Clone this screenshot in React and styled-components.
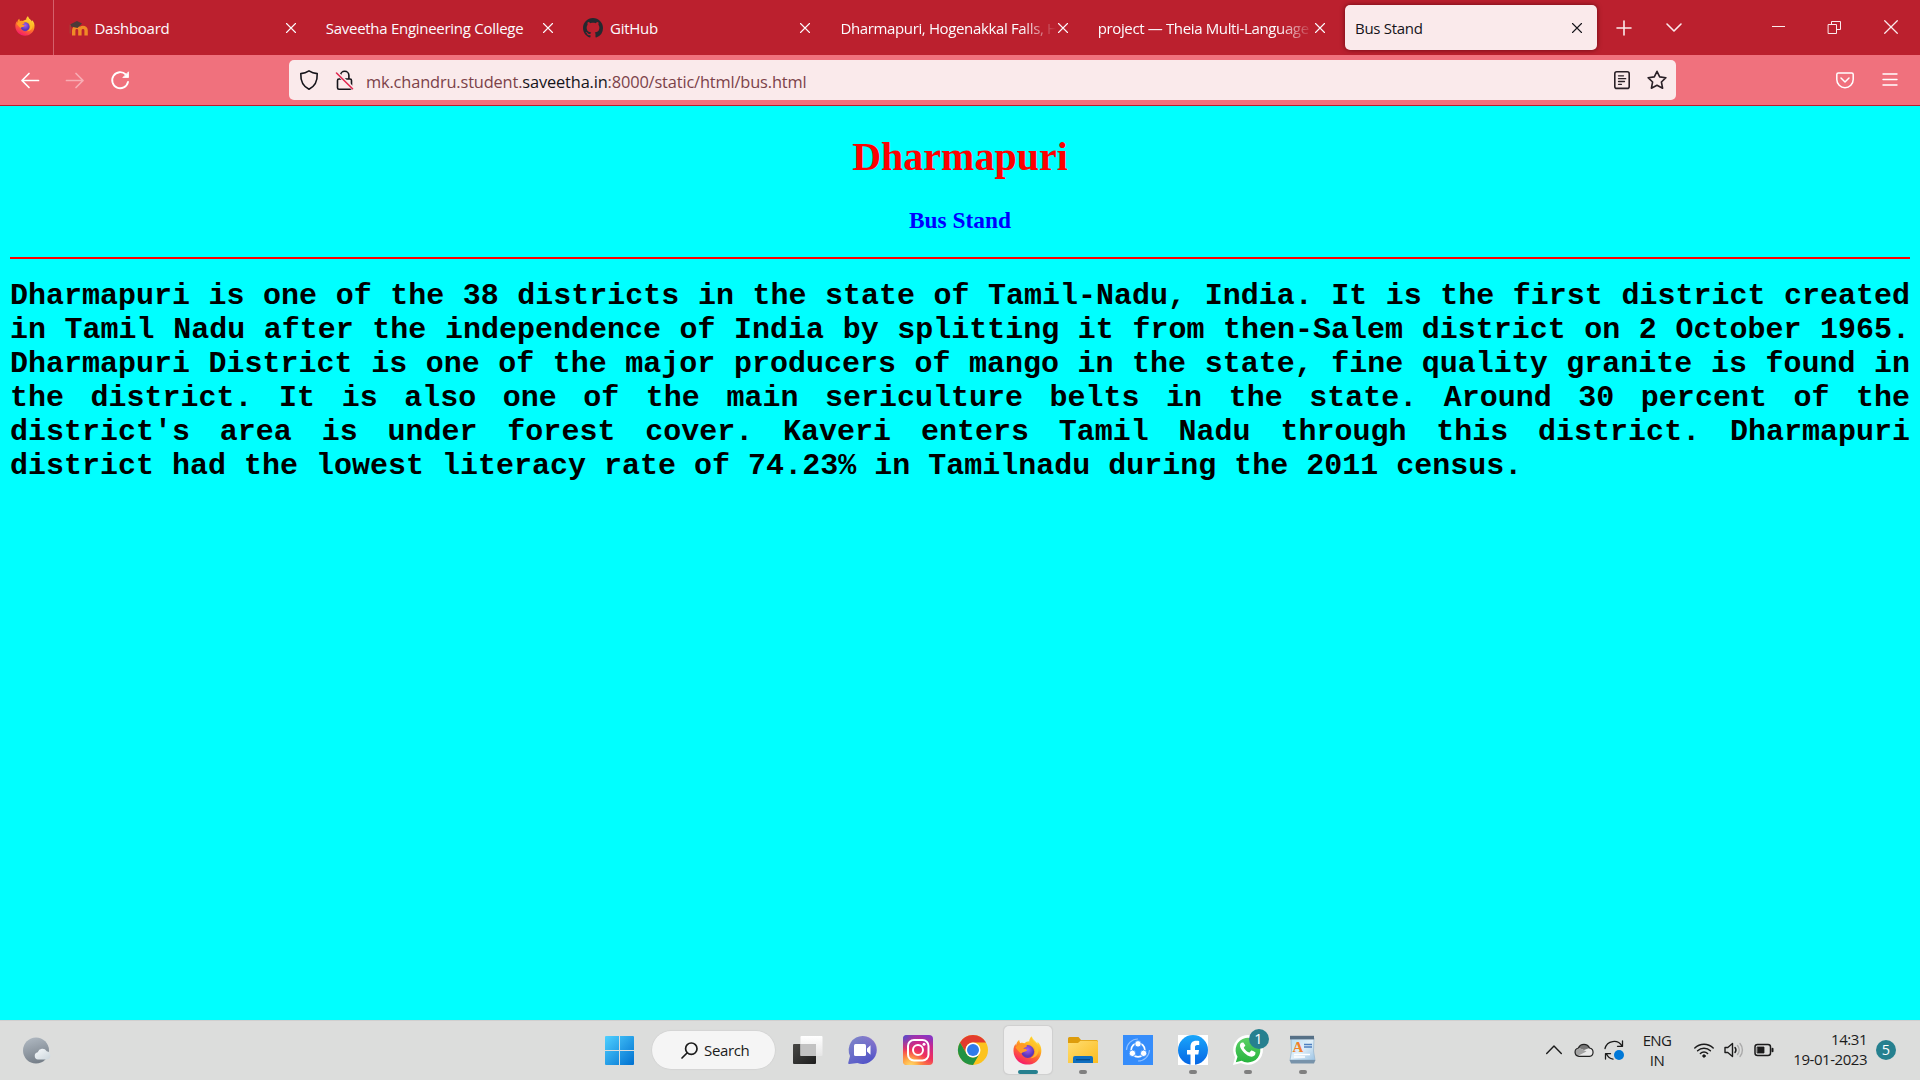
import React from "react";
import styled, { createGlobalStyle } from "styled-components";

const Global = createGlobalStyle`
  html, body { margin: 0; padding: 0; }
  body { font-family: "Open Sans", "Noto Sans", sans-serif; overflow: hidden; }
  * { box-sizing: border-box; }
  svg { display: block; flex: none; overflow: visible; }
`;

const Screen = styled.div`
  width: 1920px;
  height: 1080px;
  display: grid;
  grid-template-rows: 55px 51px 914px 60px;
  background: #00ffff;
`;

const TabBar = styled.header`
  display: flex;
  align-items: stretch;
  background: #bb202e;
  color: #fbeaec;
`;
const ViewButton = styled.div`
  width: 54px;
  padding: 0 0 4px 15px;
  display: flex;
  align-items: center;
  border-right: 1px solid #d4616b;
`;
const Tabs = styled.div`
  display: flex;
  padding-left: 2px;
`;
const Tab = styled.div`
  width: 252.3px;
  height: 45px;
  margin: 5px 2.5px;
  padding: 0 15px 0 10px;
  display: flex;
  align-items: center;
  gap: 7px;
  border-radius: 5px;
  background: ${(p) => (p.$active ? "#faeaeb" : "transparent")};
  box-shadow: ${(p) => (p.$active ? "0 0 5px rgba(70, 0, 8, 0.7)" : "none")};
  color: ${(p) => (p.$active ? "#15141a" : "#fbfbfe")};
`;
const TabTitle = styled.span`
  flex: 1;
  min-width: 0;
  white-space: nowrap;
  font-size: 15px;
  line-height: 24px;
  padding-top: 1px;
  letter-spacing: ${(p) => (p.$fade ? "-0.36px" : "-0.28px")};
  margin-right: ${(p) => (p.$fade ? "-5px" : "0")};
  mask-image: ${(p) => (p.$fade ? "linear-gradient(to left, transparent, #000 34px)" : "none")};
`;
const TabActions = styled.div`
  display: flex;
  align-items: center;
  gap: 32px;
  padding-left: 14px;
`;
const WindowControls = styled.div`
  margin-left: auto;
  display: flex;
  align-items: center;
  gap: 43px;
  padding: 0 22px 1px 0;
`;

const NavBar = styled.nav`
  display: flex;
  align-items: center;
  background: #f0717d;
  border-bottom: 1px solid #bb202e;
`;
const NavButtons = styled.div`
  width: 289px;
  padding-left: 20px;
  display: flex;
  align-items: center;
  gap: 25px;
`;
const UrlBar = styled.div`
  width: 1387px;
  height: 40px;
  padding: 0 9px 0 10px;
  display: flex;
  align-items: center;
  background: #faeaeb;
  border-radius: 5px;
`;
const UrlIcons = styled.div`
  display: flex;
  gap: 15px;
  width: 67px;
`;
const Url = styled.div`
  flex: 1;
  font-size: 16.4px;
  letter-spacing: -0.16px;
  line-height: 24px;
  padding-top: 3px;
  color: #7c4249;
`;
const Host = styled.span`
  color: #15141a;
`;
const PageActions = styled.div`
  display: flex;
  gap: 15px;
`;
const NavEnd = styled.div`
  margin-left: auto;
  display: flex;
  align-items: center;
  gap: 26px;
  padding-right: 20px;
`;

const Page = styled.main`
  padding: 0 10px;
  display: flex;
  flex-direction: column;
  font-family: "Liberation Serif", "Times New Roman", serif;
`;
const Title = styled.h1`
  margin: 28px 0 0;
  font-size: 40px;
  line-height: 46px;
  text-align: center;
  color: #ff0000;
`;
const Subtitle = styled.h3`
  margin: 27px 0 0;
  font-size: 23.4px;
  line-height: 27px;
  text-align: center;
  color: #0000ff;
`;
const Rule = styled.hr`
  width: 100%;
  height: 2px;
  margin: 23px 0 20px;
  border: 0;
  background: #ff0000;
`;
const Story = styled.p`
  margin: 0;
  font: bold 30px/34px "Liberation Mono", "Courier New", monospace;
  text-align: justify;
  color: #000;
`;

const Taskbar = styled.footer`
  display: grid;
  grid-template-columns: 592px 739px 1fr;
  align-items: center;
  background: #dcdddc;
  box-shadow: inset 0 1px 0 #d0cfcf;
  color: #1b1b1b;
`;
const Weather = styled.div`
  padding-left: 22px;
`;
const Dock = styled.div`
  display: flex;
  align-items: center;
`;
const Slot = styled.div`
  width: ${(p) => p.$w || 55}px;
  height: 60px;
  display: flex;
  align-items: center;
  justify-content: center;
`;
const Tile = styled.div`
  position: relative;
  width: 48px;
  height: 48px;
  display: flex;
  align-items: center;
  justify-content: center;
  border-radius: 5px;
  background: ${(p) => (p.$active ? "#eeeeee" : "transparent")};
  box-shadow: ${(p) => (p.$active ? "0 0 1px 0.5px #cfcfcf" : "none")};
`;
const Indicator = styled.i`
  position: absolute;
  bottom: 0;
  left: 50%;
  transform: translateX(-50%);
  width: ${(p) => (p.$active ? 20 : 8)}px;
  height: 4px;
  border-radius: 2px;
  background: ${(p) => (p.$active ? "#26808f" : "#808080")};
`;
const Count = styled.span`
  width: 20px;
  height: 20px;
  border-radius: 50%;
  background: #26808f;
  color: #fff;
  font-size: 14.5px;
  line-height: 20px;
  text-align: center;
`;
const FloatingCount = styled(Count)`
  position: absolute;
  left: 25px;
  top: 3px;
`;
const Search = styled.div`
  width: 123px;
  height: 38px;
  padding-left: 29px;
  display: flex;
  align-items: center;
  gap: 6px;
  border-radius: 19px;
  background: #f5f5f5;
  box-shadow: 0 0 1px 0.5px #cdcdcd;
  font-size: 15px;
  letter-spacing: -0.35px;
`;
const Tray = styled.div`
  display: flex;
  align-items: center;
  justify-content: flex-end;
  padding-right: 24px;
  font-size: 15px;
  line-height: 20px;
`;
const TrayIcons = styled.div`
  display: flex;
  align-items: center;
  gap: 10px;

  svg:first-child {
    margin-right: ${(p) => p.$lead || 0}px;
  }
`;
const Language = styled.div`
  width: 70px;
  padding-right: 4px;
  text-align: center;
  letter-spacing: -0.6px;
`;
const Clock = styled.div`
  width: 93px;
  padding-bottom: 2px;
  text-align: right;
  letter-spacing: -0.46px;
  margin-right: 9px;
`;

const Line = ({ w = 20, h = w, box = "0 0 20 20", sw = 1.5, color = "currentColor", children }) => (
  <svg width={w} height={h} viewBox={box} fill="none" stroke={color} strokeWidth={sw} strokeLinecap="round" strokeLinejoin="round">
    {children}
  </svg>
);

const Cross = ({ size = 10, sw = 1.1 }) => (
  <Line w={size} box="0 0 10 10" sw={sw}>
    <path d="M.5.5l9 9M9.5.5l-9 9" />
  </Line>
);

const Firefox = ({ size, id }) => (
  <svg width={size} height={size} viewBox="0 0 30 30">
    <defs>
      <linearGradient id={id + "a"} x1=".8" y1="0" x2=".3" y2="1">
        <stop offset="0" stopColor="#fff44f" />
        <stop offset=".35" stopColor="#ffb41f" />
        <stop offset=".6" stopColor="#ff6a2e" />
        <stop offset="1" stopColor="#f6156f" />
      </linearGradient>
      <radialGradient id={id + "b"} cx=".5" cy=".35">
        <stop offset="0" stopColor="#a65cf2" />
        <stop offset="1" stopColor="#5b37b8" />
      </radialGradient>
    </defs>
    <path fill={`url(#${id}a)`} d="M17 5.500C17 3 18 1 19.500.3c.4 3 3.300 4.300 5 6.700.3.400.6.800.8 1.300.1-1 .1-1.500 0-2.300C28.500 8.500 30 13 29 18c-1.400 7-7.200 11.600-14 11.600C7 29.600.7 23.500.5 15.500c-.1-3 .8-5.600 2.200-7.500.1 1 .2 1.500.5 2C3.500 7.500 4.500 5.500 6.500 4c0 1.500.3 2.500 1 3.400 1.500-.5 3-.4 4.500.2 1-1.300 3-2.100 5-2.100z" />
    <circle cx="15.200" cy="16" r="6.700" fill={`url(#${id}b)`} />
    <path fill="#ff9a25" d="M2.500 12c2-3 5-4 9-3.500 1.500.2 2.500.8 3 1.500 0 1.700-3.500 1.800-3.700 3.300 3-.4 4.200 1.200 3.200 2.200-2 1.200-3.500.6-5.500 2.500-2-1-4-4-6-6z" />
    <path fill="#ffc22c" d="M17 5.500c2.500 1.500 5 4 5.800 8 .8 4-1.300 8-5 9.500 5.500.3 9.500-4.500 8.500-10.500C25.500 8.500 20 6.500 19.500 1 18 2 17 3.500 17 5.500z" opacity=".85" />
  </svg>
);

const Moodle = () => (
  <svg width="19" height="20" viewBox="0 0 19 20">
    <path d="M4.700 17.500v-5a3.100 3.100 0 0 1 6.200 0v5m0-5a3.100 3.100 0 0 1 6.200 0v5" fill="none" stroke="#f08a26" strokeWidth="3.400" />
    <path d="M1 6.500L8 3l5 2.500L8.500 10 2 8.500z" fill="#4b3a38" />
    <path d="M1.200 6.500v9" stroke="#9d4a3a" strokeWidth="1" />
  </svg>
);

const GitHubMark = () => (
  <svg width="20" height="20" viewBox="0 0 16 16" fill="#24292f">
    <path d="M8 0C3.580 0 0 3.580 0 8c0 3.540 2.290 6.530 5.470 7.590.4.070.55-.17.55-.38 0-.19-.01-.82-.01-1.490-2.010.37-2.530-.49-2.690-.94-.09-.23-.48-.94-.82-1.130-.28-.15-.68-.52-.01-.53.63-.01 1.080.58 1.230.82.72 1.210 1.870.87 2.330.66.070-.52.28-.87.51-1.070-1.780-.2-3.640-.89-3.640-3.950 0-.87.31-1.590.82-2.150-.08-.2-.36-1.020.08-2.120 0 0 .67-.21 2.200.82.64-.18 1.320-.27 2-.27s1.360.09 2 .27c1.530-1.040 2.200-.82 2.200-.82.44 1.100.16 1.920.08 2.120.51.56.82 1.270.82 2.150 0 3.070-1.870 3.750-3.650 3.950.29.25.54.73.54 1.480 0 1.070-.01 1.930-.01 2.200 0 .21.15.46.55.38A8.010 8.010 0 0 0 16 8c0-4.420-3.580-8-8-8z" />
  </svg>
);

const TABS = [
  { title: "Dashboard", icon: <Moodle /> },
  { title: "Saveetha Engineering College" },
  { title: "GitHub", icon: <GitHubMark /> },
  { title: "Dharmapuri, Hogenakkal Falls, H", fade: true },
  { title: "project — Theia Multi-Language", fade: true },
  { title: "Bus Stand", active: true },
];

const WeatherIcon = () => (
  <svg width="29" height="27" viewBox="0 0 29 27">
    <defs>
      <linearGradient id="moon" x1=".3" y1="0" x2=".6" y2="1">
        <stop offset="0" stopColor="#aeb7c0" />
        <stop offset="1" stopColor="#747d87" />
      </linearGradient>
      <linearGradient id="mcloud" x1="0" y1="0" x2="1" y2="1">
        <stop offset="0" stopColor="#f6f9fb" />
        <stop offset="1" stopColor="#ccd6dd" />
      </linearGradient>
    </defs>
    <circle cx="14" cy="13.500" r="13" fill="url(#moon)" />
    <path d="M16 22.500a3.700 3.700 0 0 1-.3-7.300 5 5 0 0 1 9-1 4.200 4.200 0 0 1 .3 8.300z" fill="url(#mcloud)" />
  </svg>
);

const WindowsLogo = () => (
  <svg width="29" height="29" viewBox="0 0 29 29">
    <defs>
      <linearGradient id="win" x1="0" y1="0" x2="1" y2="1">
        <stop offset="0" stopColor="#4fd0ff" />
        <stop offset="1" stopColor="#0070d0" />
      </linearGradient>
    </defs>
    <path fill="url(#win)" d="M1 0h13v14H0V1a1 1 0 0 1 1-1zM15 0h13a1 1 0 0 1 1 1v13H15zM0 15h14v14H1a1 1 0 0 1-1-1zM15 15h14v13a1 1 0 0 1-1 1H15z" />
  </svg>
);

const TaskView = () => (
  <svg width="30" height="28" viewBox="0 0 30 28">
    <defs>
      <linearGradient id="tvd" x1="0" y1="0" x2="1" y2="1">
        <stop offset="0" stopColor="#484846" />
        <stop offset="1" stopColor="#1e1e1e" />
      </linearGradient>
      <linearGradient id="tvl" x1="0" y1="0" x2="0" y2="1">
        <stop offset="0" stopColor="#fff" />
        <stop offset="1" stopColor="#e6e6e6" />
      </linearGradient>
    </defs>
    <rect y="8" width="23" height="20" rx="1" fill="url(#tvd)" />
    <rect x="7.500" width="22" height="20" rx="1" fill="url(#tvl)" />
    <path d="M7.500 8H23v12H7.500z" fill="#c2c2c2" />
  </svg>
);

const Chat = () => (
  <svg width="29" height="28" viewBox="0 0 29 28">
    <defs>
      <linearGradient id="chat" x1=".1" y1="0" x2=".8" y2="1">
        <stop offset="0" stopColor="#8288c9" />
        <stop offset="1" stopColor="#4f50c8" />
      </linearGradient>
      <linearGradient id="chat2" x1="0" y1=".8" x2="1" y2="0">
        <stop offset=".5" stopColor="#a07ad0" stopOpacity="0" />
        <stop offset="1" stopColor="#a77bd0" />
      </linearGradient>
    </defs>
    <path d="M15 0a14 14 0 1 1-5.500 27L1.500 28c-1 0-1.500-.7-1.200-1.600L2 20A14 14 0 0 1 15 0z" fill="url(#chat)" />
    <circle cx="15" cy="14" r="14" fill="url(#chat2)" opacity=".6" />
    <rect x="6" y="8" width="12" height="12" rx="1.500" fill="#fff" />
    <path d="M19 12.500l3.500-3.200v9.400L19 15.500z" fill="#fff" />
  </svg>
);

const Instagram = () => (
  <svg width="30" height="30" viewBox="0 0 30 30">
    <defs>
      <linearGradient id="ig1" x1=".3" y1="1" x2=".7" y2="0">
        <stop offset="0" stopColor="#ff9a3c" />
        <stop offset=".4" stopColor="#f0305c" />
        <stop offset=".75" stopColor="#c9268f" />
        <stop offset="1" stopColor="#8a35c2" />
      </linearGradient>
      <radialGradient id="ig2" cx=".25" cy="1.050" r=".6">
        <stop offset="0" stopColor="#ffe070" />
        <stop offset=".4" stopColor="#ffb04a" />
        <stop offset="1" stopColor="#ff5a3c" stopOpacity="0" />
      </radialGradient>
      <radialGradient id="ig3" cx="0" cy="0" r=".55">
        <stop offset="0" stopColor="#3f55d4" />
        <stop offset="1" stopColor="#7a40c8" stopOpacity="0" />
      </radialGradient>
    </defs>
    {["ig1", "ig2", "ig3"].map((g) => (
      <rect key={g} width="30" height="30" rx="4" fill={`url(#${g})`} />
    ))}
    <g fill="none" stroke="#fff" strokeWidth="2">
      <rect x="5" y="5" width="20.500" height="20.500" rx="6" />
      <circle cx="15" cy="15" r="5" />
    </g>
    <circle cx="21" cy="9.200" r="1.500" fill="#fff" />
  </svg>
);

const Chrome = () => (
  <svg width="30" height="30" viewBox="0 0 30 30">
    <circle cx="15" cy="15" r="15" fill="#fcc31e" />
    <path d="M2 7.500A15 15 0 0 1 28 7.500H15A7.500 7.500 0 0 0 8.500 18.750z" fill="#e33b2e" />
    <path d="M2 7.500A15 15 0 0 0 15 30l6.500-11.250a7.500 7.500 0 0 1-13 0z" fill="#229342" />
    <circle cx="15" cy="15" r="7.500" fill="#fff" />
    <circle cx="15" cy="15" r="6" fill="#2f7bea" />
  </svg>
);

const Folder = () => (
  <svg width="30" height="27" viewBox="0 0 30 27">
    <defs>
      <linearGradient id="fold" x1="0" y1="0" x2="1" y2="1">
        <stop offset="0" stopColor="#ffdd72" />
        <stop offset="1" stopColor="#fbbc1f" />
      </linearGradient>
    </defs>
    <path d="M1.500 0h9l2.500 3h15.500A1.500 1.500 0 0 1 30 4.500V12H0V1.500A1.500 1.500 0 0 1 1.500 0z" fill="#dd9c0c" />
    <path d="M0 6h10l2.500-2.200h16A1.500 1.500 0 0 1 30 5.300V26H0z" fill="url(#fold)" />
    <path d="M5 26v-5a2 2 0 0 1 2-2h16a2 2 0 0 1 2 2v5z" fill="#0f6fc0" />
    <path d="M8 22.700h14" stroke="#064a86" strokeWidth="1.300" />
  </svg>
);

const ShareIt = () => (
  <svg width="30" height="30" viewBox="0 0 30 30" fill="none">
    <path d="M0 0h30v30H0z" fill="#368dfb" />
    <path d="M3.500 15a11.500 11.500 0 0 1 11.500-11M26.500 15a11.500 11.500 0 0 1-11.500 11" stroke="#8fc0ff" strokeWidth="1.200" />
    <circle cx="15" cy="15" r="6.800" stroke="#fff" strokeWidth="1.700" />
    <g fill="#fff" stroke="#368dfb" strokeWidth=".8">
      <circle cx="15" cy="8.800" r="3.200" />
      <circle cx="9.400" cy="18.300" r="3.200" />
      <circle cx="20.600" cy="18.300" r="3.200" />
    </g>
  </svg>
);

const Facebook = () => (
  <svg width="30" height="30" viewBox="0 0 30 30">
    <defs>
      <linearGradient id="fb" x1="0" y1="0" x2="0" y2="1">
        <stop offset="0" stopColor="#19a6fb" />
        <stop offset="1" stopColor="#0565e4" />
      </linearGradient>
    </defs>
    <path d="M0 0h30v30H0z" fill="#fff" />
    <circle cx="15" cy="15" r="15" fill="url(#fb)" />
    <path d="M12.500 30V19.500H9V15h3.500v-3.200c0-4 2.200-6 5.600-6 1.300 0 2.400.2 3.100.3V10h-2c-1.700 0-2.200 1-2.200 2.200V15H21l-.7 4.500H17V30z" fill="#fff" />
  </svg>
);

const WhatsApp = () => (
  <svg width="30" height="30" viewBox="0 0 30 30">
    <defs>
      <linearGradient id="wa" x1="0" y1="0" x2="0" y2="1">
        <stop offset="0" stopColor="#5bd066" />
        <stop offset="1" stopColor="#27b43e" />
      </linearGradient>
    </defs>
    <path d="M0 30l2.100-7.700A14.900 14.900 0 1 1 7.900 28z" fill="#fff" />
    <path d="M2.800 27.200l1.700-5.500a12.400 12.400 0 1 1 4.100 4z" fill="url(#wa)" />
    <path d="M11 8.500c-.4-.9-.8-.9-1.300-.9-2 0-2.900 1.800-2.700 3.400.3 2.800 4.700 8.600 9.500 10.300 3.500 1.200 6.200-.6 6-3.700-.1-.6-3.700-2.300-4.200-2.100-.6.300-1.300 2-2 2.100-1.200.1-5.300-3.200-5.500-5 0-.6 1.500-1.600 1.500-2.200 0-.5-1-1.300-1.300-1.900z" fill="#fff" />
  </svg>
);

const WordPad = () => (
  <svg width="27" height="30" viewBox="0 0 27 30">
    <defs>
      <linearGradient id="wp" x1="0" y1="0" x2="1" y2="1">
        <stop offset="0" stopColor="#b8dcf4" />
        <stop offset=".5" stopColor="#e0eff9" />
        <stop offset="1" stopColor="#9cc3e4" />
      </linearGradient>
    </defs>
    <path d="M2 3h23l-.5 13L26 25H1l1.500-9z" fill="url(#wp)" stroke="#93b4cf" strokeWidth=".7" />
    <path d="M1 .8h24v3.600H1z" fill="#567086" />
    <path d="M.5 25h26l-1.500 3.500H2z" fill="#7893aa" />
    <text x="3.500" y="16.500" fontFamily="Liberation Serif, serif" fontWeight="bold" fontSize="15" fill="#f2812a">A</text>
    <path d="M15 9.500h8M15 12h8" stroke="#4d7fc0" strokeWidth="1.300" />
    <path d="M5 19.500h16M5 22h11" stroke="#fff" strokeWidth="1.300" />
  </svg>
);

const DOCK = [
  { key: "view", icon: <TaskView /> },
  { key: "chat", icon: <Chat /> },
  { key: "insta", icon: <Instagram /> },
  { key: "chrome", icon: <Chrome /> },
  { key: "firefox", icon: <Firefox size={29} id="ffd" />, open: true, active: true },
  { key: "files", icon: <Folder />, open: true },
  { key: "share", icon: <ShareIt /> },
  { key: "facebook", icon: <Facebook />, open: true },
  { key: "whatsapp", icon: <WhatsApp />, open: true, count: 1 },
  { key: "wordpad", icon: <WordPad />, open: true },
];

export default function App() {
  return (
    <Screen>
      <Global />
      <TabBar>
        <ViewButton>
          <Firefox size={20} id="fft" />
        </ViewButton>
        <Tabs>
          {TABS.map((t) => (
            <Tab key={t.title} $active={t.active}>
              {t.icon}
              <TabTitle $fade={t.fade}>{t.title}</TabTitle>
              <Cross />
            </Tab>
          ))}
        </Tabs>
        <TabActions>
          <Line w={20} sw={1.6}>
            <path d="M10 3v14M3 10h14" />
          </Line>
          <Line w={16} h={16} box="0 0 16 16" sw={1.6}>
            <path d="M1 4l7 7 7-7" />
          </Line>
        </TabActions>
        <WindowControls>
          <Line w={13} box="0 0 13 13" sw={1}>
            <path d="M.5 5.500h12" strokeLinecap="square" />
          </Line>
          <Line w={13} box="0 0 13 13" sw={1}>
            <path d="M.5 3.500h8v9h-8zM3.500 3.500v-3h9v8h-4" strokeLinejoin="miter" />
          </Line>
          <Cross size={14} sw={0.9} />
        </WindowControls>
      </TabBar>

      <NavBar>
        <NavButtons>
          <Line color="#fff" sw={1.7}>
            <path d="M2 10.500h16.500M9 3.500l-7 7 7 7" />
          </Line>
          <Line color="#f8adb4" sw={1.7}>
            <path d="M1.500 10.500H18M11 3.500l7 7-7 7" />
          </Line>
          <Line color="#fff" sw={1.8}>
            <path d="M15.800 4.500A8 8 0 1 0 18 12" />
            <path d="M18.500 2.200v5.300h-5.300z" fill="#fff" strokeWidth=".8" />
          </Line>
        </NavButtons>
        <UrlBar>
          <UrlIcons>
            <Line color="#15141a" sw={1.6}>
              <path d="M10 .9c2.500 1.600 5 2.400 8.200 2.700.3 6.500-1.800 12.500-8.200 15.600C3.600 16.100 1.500 10.100 1.800 3.600 5 3.300 7.500 2.500 10 .9z" />
            </Line>
            <Line color="#15141a" sw={1.6}>
              <path d="M6.500 9V5.500a4.200 4.200 0 0 1 8.400 0V9M3.500 10.500a1.500 1.500 0 0 1 1.500-1.500h11a1.500 1.500 0 0 1 1.500 1.500v7.200a1.500 1.500 0 0 1-1.500 1.500H5a1.500 1.500 0 0 1-1.500-1.500z" />
              <path d="M3.500 3.500l15 14.500" stroke="#faeaeb" strokeWidth="3.600" />
              <path d="M2.500 3l16 15.700" stroke="#e22850" />
            </Line>
          </UrlIcons>
          <Url>
            mk.chandru.student.<Host>saveetha.in</Host>:8000/static/html/bus.html
          </Url>
          <PageActions>
            <Line color="#2a2127" sw={1.6}>
              <rect x="2.800" y="1.800" width="14.400" height="16.600" rx="2" />
              <path d="M6.500 5.800h5M6.500 8.700h7.200M6.500 11.500h6M6.500 14.300h3" strokeWidth="1.300" />
            </Line>
            <Line color="#2a2127" sw={1.6}>
              <path d="M10 1.300l2.700 5.600 6.200.8-4.500 4.300 1.200 6.200L10 15.200l-5.600 3 1.200-6.200L1.100 7.700l6.200-.8z" />
            </Line>
          </PageActions>
        </UrlBar>
        <NavEnd>
          <Line color="#fff" w={18} box="0 0 18 18" sw={1.5}>
            <path d="M2.300 2h13.400A1.500 1.500 0 0 1 17.200 3.500V8.500a8.200 8.200 0 0 1-16.400 0v-5A1.500 1.500 0 0 1 2.300 2z" />
            <path d="M5 7l4 4 4-4" />
          </Line>
          <Line color="#fff" sw={1.4}>
            <path d="M3 4h14M3 9.500h14M3 15h14" />
          </Line>
        </NavEnd>
      </NavBar>

      <Page>
        <Title>Dharmapuri</Title>
        <Subtitle>Bus Stand</Subtitle>
        <Rule />
        <Story>
          Dharmapuri is one of the 38 districts in the state of Tamil-Nadu, India. It is the first district created in Tamil
          Nadu after the independence of India by splitting it from then-Salem district on 2 October 1965. Dharmapuri
          District is one of the major producers of mango in the state, fine quality granite is found in the district. It is
          also one of the main sericulture belts in the state. Around 30 percent of the district's area is under forest
          cover. Kaveri enters Tamil Nadu through this district. Dharmapuri district had the lowest literacy rate of 74.23%
          in Tamilnadu during the 2011 census.
        </Story>
      </Page>

      <Taskbar>
        <Weather>
          <WeatherIcon />
        </Weather>
        <Dock>
          <Slot>
            <WindowsLogo />
          </Slot>
          <Slot $w={133}>
            <Search>
              <Line w={17} box="0 0 17 17" sw={1.7}>
                <circle cx="10.300" cy="6.700" r="5.700" />
                <path d="M6 11l-5 5" />
              </Line>
              Search
            </Search>
          </Slot>
          {DOCK.map((d) => (
            <Slot key={d.key}>
              <Tile $active={d.active}>
                {d.icon}
                {d.count && <FloatingCount>{d.count}</FloatingCount>}
                {d.open && <Indicator $active={d.active} />}
              </Tile>
            </Slot>
          ))}
        </Dock>
        <Tray>
          <TrayIcons $lead={2}>
            <Line w={16} box="0 0 16 16" sw={1.4}>
              <path d="M.7 11.500L8 4l7.300 7.500" />
            </Line>
            <svg width="20" height="14" viewBox="0 0 20 14">
              <path d="M5 13.300a4.200 4.200 0 0 1-.6-8.300A6 6 0 0 1 15.500 5a4.200 4.200 0 0 1 0 8.300z" fill="#e8e8e8" />
              <path d="M4.500 5A6 6 0 0 1 15.500 5L10 7z" fill="#777" />
              <path d="M1 8.500C2 5.500 4 4.500 6.500 5.500l6 3-9 4.500C1.500 12 .5 10.500 1 8.500z" fill="#a3a3a3" />
              <path d="M5 13.300a4.200 4.200 0 0 1-.6-8.300A6 6 0 0 1 15.500 5a4.200 4.200 0 0 1 0 8.300z" fill="none" stroke="#222" strokeWidth="1.200" />
            </svg>
            <Line w={20} sw={1.3}>
              <path d="M1 8.500a9.300 9.300 0 0 1 17-2.500M18.500 1v5.300h-5M9 19.200A9 9 0 0 1 2.500 14M1.500 19v-5.300h5" />
              <circle cx="15" cy="15" r="5" fill="#0078d7" stroke="none" />
            </Line>
          </TrayIcons>
          <Language>
            ENG
            <br />
            IN
          </Language>
          <TrayIcons>
            <Line w={20} sw={1.5}>
              <path d="M.8 8a13 13 0 0 1 18.400 0M3.600 10.800a9 9 0 0 1 12.800 0M6.400 13.500a5 5 0 0 1 7.200 0" />
              <circle cx="10" cy="16" r="1.300" fill="currentColor" strokeWidth=".8" />
            </Line>
            <Line w={20} sw={1.4}>
              <path d="M1 7.500h2.800L8.500 3.500v13l-4.700-4H1zM11 7.500a4 4 0 0 1 0 5" />
              <path d="M13.500 5.500a7 7 0 0 1 0 9M16 3.500a10 10 0 0 1 0 13" stroke="#aaa" />
            </Line>
            <Line w={20} sw={1.5}>
              <rect x="1" y="4.500" width="15.500" height="11" rx="2.500" />
              <rect x="3.500" y="7" width="6.500" height="6" fill="currentColor" strokeWidth=".8" />
              <path d="M18.500 8.800v2.400" strokeWidth="2" />
            </Line>
          </TrayIcons>
          <Clock>
            14:31
            <br />
            19-01-2023
          </Clock>
          <Count>5</Count>
        </Tray>
      </Taskbar>
    </Screen>
  );
}
